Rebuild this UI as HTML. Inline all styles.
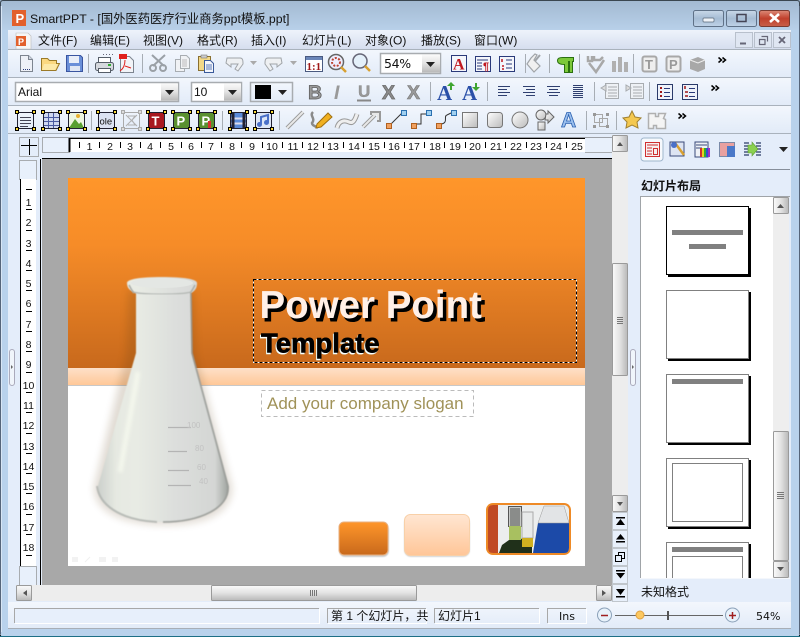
<!DOCTYPE html>
<html><head><meta charset="utf-8">
<style>
html,body{margin:0;padding:0;background:#000;width:800px;height:637px;overflow:hidden}
svg{display:block}
text{font-family:"Liberation Sans","WenQuanYi Zen Hei","Noto Sans CJK SC",sans-serif;font-size:12px;fill:#111}
</style></head><body>
<svg width="800" height="637" viewBox="0 0 800 637" xmlns="http://www.w3.org/2000/svg">
<defs>
<linearGradient id="gTitle" x1="0" y1="0" x2="0" y2="1"><stop offset="0" stop-color="#a2b9d1"/><stop offset="1" stop-color="#b8d0e9"/></linearGradient>
<linearGradient id="gMenu" x1="0" y1="0" x2="0" y2="1"><stop offset="0" stop-color="#eef3fb"/><stop offset="1" stop-color="#d6deef"/></linearGradient>
<linearGradient id="gBar" x1="0" y1="0" x2="0" y2="1"><stop offset="0" stop-color="#f3f7fd"/><stop offset="1" stop-color="#e2ebf8"/></linearGradient>
<linearGradient id="gOrange" x1="0" y1="0" x2="0" y2="1"><stop offset="0" stop-color="#ff962a"/><stop offset=".35" stop-color="#f68c28"/><stop offset="1" stop-color="#c8691c"/></linearGradient>
<linearGradient id="gPeach" x1="0" y1="0" x2="0" y2="1"><stop offset="0" stop-color="#fde0c8"/><stop offset="1" stop-color="#ffc898"/></linearGradient>
<linearGradient id="gPeach2" x1="0" y1="0" x2="0" y2="1"><stop offset="0" stop-color="#ffe6d2"/><stop offset="1" stop-color="#ffc698"/></linearGradient>
<linearGradient id="gBtnO" x1="0" y1="0" x2="0" y2="1"><stop offset="0" stop-color="#ff962a"/><stop offset="1" stop-color="#c8691c"/></linearGradient>
<linearGradient id="gV" x1="0" y1="0" x2="1" y2="0"><stop offset="0" stop-color="#fafafa"/><stop offset=".5" stop-color="#e2e2e2"/><stop offset="1" stop-color="#b8b8b8"/></linearGradient>
<linearGradient id="gH" x1="0" y1="0" x2="0" y2="1"><stop offset="0" stop-color="#fafafa"/><stop offset=".5" stop-color="#e2e2e2"/><stop offset="1" stop-color="#b8b8b8"/></linearGradient>
<linearGradient id="gTB" x1="0" y1="0" x2="0" y2="1"><stop offset="0" stop-color="#c9d8e8"/><stop offset=".5" stop-color="#a6bcd4"/><stop offset="1" stop-color="#bfd3e8"/></linearGradient>
<linearGradient id="gClose" x1="0" y1="0" x2="0" y2="1"><stop offset="0" stop-color="#dc8a78"/><stop offset=".5" stop-color="#c0402c"/><stop offset="1" stop-color="#c8604a"/></linearGradient>
<linearGradient id="gFlask" x1="0" y1="0" x2="1" y2="0"><stop offset="0" stop-color="#ccd0cc"/><stop offset=".14" stop-color="#e6e9e2"/><stop offset=".3" stop-color="#e8ebe4"/><stop offset=".6" stop-color="#dcdedc"/><stop offset=".9" stop-color="#d4d6d4"/><stop offset="1" stop-color="#a0a4a0"/></linearGradient>
<linearGradient id="gGrey" x1="0" y1="0" x2="1" y2="1"><stop offset="0" stop-color="#fff"/><stop offset="1" stop-color="#bbb"/></linearGradient>
<filter id="b1" x="-30%" y="-30%" width="160%" height="160%"><feGaussianBlur stdDeviation="4"/></filter>
<filter id="b2" x="-10%" y="-10%" width="120%" height="120%"><feGaussianBlur stdDeviation=".6"/></filter>
<filter id="b3" x="-40%" y="-20%" width="180%" height="140%"><feGaussianBlur stdDeviation="1.500"/></filter>

<g id="hb"><rect x="3.500" y="3.500" width="16" height="16" fill="none" stroke="#223"/><g fill="#f8d838" stroke="#000"><rect x="1.500" y="1.500" width="3" height="3"/><rect x="18.500" y="1.500" width="3" height="3"/><rect x="1.500" y="18.500" width="3" height="3"/><rect x="18.500" y="18.500" width="3" height="3"/></g></g>
<g id="hbg"><rect x="3.500" y="3.500" width="16" height="16" fill="none" stroke="#aaa"/><g fill="#ddd" stroke="#aaa"><rect x="1.500" y="1.500" width="3" height="3"/><rect x="18.500" y="1.500" width="3" height="3"/><rect x="1.500" y="18.500" width="3" height="3"/><rect x="18.500" y="18.500" width="3" height="3"/></g></g>
<g id="ar"><path d="M0 0h9l-4.500 5z" fill="#222"/></g>
<g id="chev"><path d="M.5 .5l3 2.500-3 2.500M4.500 .5l3 2.500-3 2.500" fill="none" stroke="#000" stroke-width="1.500"/></g>
</defs>

<!-- frame -->
<rect width="800" height="637" fill="#b9d2ec" rx="4"/>
<rect x="0" y="0" width="800" height="30" fill="url(#gTitle)"/>
<path d="M0 636.500H800" stroke="#1c6f86"/>
<path d="M.5 6V3Q.5 .5 3 .5H797Q799.500 .5 799.500 3V6" fill="none" stroke="#3a4650"/>
<path d="M.5 6V634M799.500 6V634" stroke="#56657a"/>
<path d="M1.500 6V632" stroke="#d8e6f5"/>

<!-- content bg -->
<rect x="8" y="30" width="783" height="599" fill="#e4edfa"/>
<rect x="8" y="30" width="783" height="19" fill="url(#gMenu)"/>
<rect x="8" y="49" width="783" height="28" fill="url(#gBar)"/>
<rect x="8" y="77" width="783" height="28" fill="url(#gBar)"/>
<rect x="8" y="105" width="783" height="28" fill="url(#gBar)"/>
<path d="M8 49.500H791M8 77.500H791M8 105.500H791M8 133.500H791" stroke="#a9b2bc"/>

<!-- title -->
<rect x="12" y="10" width="14" height="16" fill="#e2602c"/>
<text x="15.500" y="23" style="font-size:13px;font-weight:bold;fill:#fff">P</text>
<text x="30" y="23" style="font-size:12.300px">SmartPPT - [国外医药医疗行业商务ppt模板.ppt]</text>
<rect x="693.500" y="10.500" width="30" height="16" rx="2" fill="url(#gTB)" stroke="#5f7187"/>
<rect x="703" y="18" width="11" height="4" rx="1" fill="#eef2f7" stroke="#5a6a7a" stroke-width=".7"/>
<rect x="726.500" y="10.500" width="30" height="16" rx="2" fill="url(#gTB)" stroke="#5f7187"/>
<rect x="737" y="14.500" width="9" height="7" fill="none" stroke="#445" stroke-width="1.500"/>
<rect x="759.500" y="10.500" width="30" height="16" rx="2" fill="url(#gClose)" stroke="#7a3a30"/>
<path d="M770 14l9 8M779 14l-9 8" stroke="#fff" stroke-width="2.600"/>

<!-- menu -->
<path d="M16 33h12l3 3v13H16z" fill="#f6f6f6" stroke="#bbb" stroke-width=".6"/>
<rect x="16" y="36" width="10" height="10" fill="#e2602c"/>
<text x="18" y="45" style="font-size:9px;font-weight:bold;fill:#fff">P</text>
<text x="38" y="44.500">文件(F)</text>
<text x="90" y="44.500">编辑(E)</text>
<text x="143" y="44.500">视图(V)</text>
<text x="197" y="44.500">格式(R)</text>
<text x="251" y="44.500">插入(I)</text>
<text x="302" y="44.500" style="font-size:11.700px">幻灯片(L)</text>
<text x="365" y="44.500">对象(O)</text>
<text x="421" y="44.500">播放(S)</text>
<text x="474" y="44.500">窗口(W)</text>
<g fill="#dfe6f2" stroke="#b8c0cc"><rect x="735.500" y="32.500" width="17" height="15"/><rect x="754.500" y="32.500" width="17" height="15"/><rect x="773.500" y="32.500" width="17" height="15"/></g>
<path d="M740 43.500h6" stroke="#667" stroke-width="2"/>
<path d="M761.500 36.500h6v5M759.500 39.500h5.500v5h-5.500z" fill="none" stroke="#667" stroke-width="1.200"/>
<path d="M779 37l6 6M785 37l-6 6" stroke="#667" stroke-width="1.800"/>

<!-- separators -->
<path d="M88.500 54v19M142.500 54v19M525.500 54v19M549.500 54v19M579.500 54v19M633.500 54v19
M430.500 82v19M487.500 82v19M594.500 82v19M649.500 82v19
M91.500 111v19M222.500 111v19M279.500 111v19M586.500 111v19M616.500 111v19" stroke="#a7adb4"/>

<!-- row1 -->
<path d="M20.500 55.500h8l4 4v12h-12z" fill="#eef1f7" stroke="#7d8590"/><path d="M28.500 55.500v4h4" fill="#cfd5e0" stroke="#7d8590"/><path d="M23 69.500h1M25 69.500h1M27 69.500h1M29 69.500h1" stroke="#2a3a7a"/>
<path d="M41.500 70.500V58.500h6l2 2h7v3h3l-3.500 7z" fill="#fbd880" stroke="#9b7a28"/><path d="M44 64h14l-3 6H42z" fill="#fde9a8"/>
<path d="M66.500 55.500h14l2 2v14h-16z" fill="#6a8fd8" stroke="#3a55a0"/><rect x="69" y="56" width="10" height="7" fill="#e9eef8"/><rect x="70" y="66" width="10" height="5" fill="#dfe6f3"/>
<g fill="#d6d9de" stroke="#565e68"><rect x="98.500" y="57.500" width="12" height="6" fill="#fff"/><rect x="95.500" y="62.500" width="18" height="8" rx="2"/><rect x="98.500" y="68.500" width="12" height="4" fill="#fff"/></g><rect x="108" y="64" width="3" height="2" fill="#3a3"/><path d="M103 54.500h1M106 54.500h1M109 54.500h1M112 54.500h1" stroke="#667"/>
<path d="M120.500 56.500h9l4 4v12h-13z" fill="#f2f4f8" stroke="#7d8590"/><path d="M119 54h8v5h-8z" fill="#e0201c"/><path d="M125 60c0 5-2 9-5 11M125 66l6 2" stroke="#e0201c" fill="none"/>
<g fill="none" stroke="#9aa0a6" stroke-width="2"><path d="M152 55l12 11M165 55l-12 11"/><circle cx="153" cy="68" r="3"/><circle cx="163" cy="68" r="3"/></g>
<g fill="#f0f2f5" stroke="#a8adb2"><rect x="175.500" y="59.500" width="9" height="12"/><path d="M180.500 55.500h6l3 3v10h-9z"/></g><path d="M182 60h5M182 62h5M182 64h5M182 66h5" stroke="#bbb"/>
<rect x="198.500" y="56.500" width="12" height="14" fill="#f2d888" stroke="#8a7030"/><rect x="201" y="55" width="6" height="3" fill="#ccc" stroke="#666" stroke-width=".5"/><path d="M204.500 60.500h6l3 3v9h-9z" fill="#f4f6fb" stroke="#3a5a9a"/><path d="M206 65h6M206 67h6M206 69h6" stroke="#5a7aba"/>
<path d="M227 58h13c3 0 3 3 3 6l-5 7-3-2 3-5h-7v3l-5-4 1-5z" fill="#eef0f2" stroke="#a0a4a8"/>
<path d="M250 61h7l-3.500 4z" fill="#aaa"/>
<path d="M280 58h-12c-3 0-3 3-3 6l5 7 3-2-3-5h7v3l5-4-1-5z" fill="#eef0f2" stroke="#a0a4a8"/>
<path d="M290 61h7l-3.500 4z" fill="#aaa"/>
<rect x="305.500" y="56.500" width="17" height="15" fill="#fff" stroke="#4a5a80"/><rect x="306" y="57" width="16" height="3" fill="#6a85b8"/><text x="306.500" y="70" style="font-size:11px;font-weight:bold;fill:#a01818;font-family:'Liberation Serif',serif">1:1</text>
<circle cx="336" cy="62" r="7.500" fill="#eef" stroke="#666" stroke-width="1.500"/><circle cx="336" cy="62" r="4" fill="none" stroke="#b43" stroke-width="2" stroke-dasharray="2 1.500"/><path d="M341 67l5 5" stroke="#d8a030" stroke-width="2.500"/>
<circle cx="360" cy="61" r="7" fill="#e4f0fa" stroke="#667" stroke-width="1.500"/><path d="M365 66l5 5" stroke="#d8a030" stroke-width="2.500"/>
<rect x="380.500" y="53.500" width="60" height="20" fill="#fff" stroke="#a8acb0" stroke-width="1.500"/><rect x="422" y="54.500" width="18" height="18" fill="url(#gH)"/><use href="#ar" x="426" y="62"/>
<text x="384" y="68" style="font-size:12.500px;font-family:'DejaVu Sans',sans-serif;letter-spacing:-.3px">54%</text>
<rect x="451.500" y="55.500" width="15" height="16" fill="#f4f6fb" stroke="#2a3a7a"/><text x="453" y="69.500" style="font-size:16px;font-weight:bold;fill:#c01820;font-family:'Liberation Serif',serif">A</text>
<rect x="475.500" y="56.500" width="15" height="15" fill="#f4f6fb" stroke="#2a3a7a"/><path d="M477 60h11M477 63h5M477 66h5M477 69h5" stroke="#2a3a7a"/><text x="483" y="70" style="font-size:11px;fill:#c01820;font-weight:bold">¶</text>
<rect x="499.500" y="56.500" width="15" height="15" fill="#f4f6fb" stroke="#2a3a7a"/><path d="M506 60h6M506 64h6M506 68h6" stroke="#2a3a7a"/><path d="M502 59v3M502 66h2M502 69h2" stroke="#c01820" stroke-width="1.500"/>
<path d="M527 64l7 8 6-6-6-6 3-5-2-1-4 4z" fill="#f0f0f0" stroke="#a0a4a8" stroke-width="1.200"/><path d="M540 55l-5 6" stroke="#a0a4a8" stroke-width="2"/>
<path d="M557.500 60.500c0-2 2-3 5-3h11v4h-1v11h-3v-11h-1v11h-4v-8c-4 0-7-1-7-4z" fill="#7cc83a" stroke="#2a7010"/>
<g stroke="#a8a8a8" fill="none" stroke-width="2.500"><path d="M588 56v5h4v-5M594 56v4h6l3-3"/><path d="M589 63l7 9 8-12"/></g>
<g fill="#b0b0b0"><rect x="612" y="61" width="4" height="11"/><rect x="618" y="57" width="4" height="15"/><rect x="624" y="62" width="4" height="10"/></g>
<rect x="642.500" y="56.500" width="14" height="15" rx="2" fill="#eee" stroke="#a8a8a8" stroke-width="2"/><text x="645" y="69" style="font-size:13px;font-weight:bold;fill:#999">T</text>
<rect x="666.500" y="56.500" width="14" height="15" rx="2" fill="#eee" stroke="#a8a8a8" stroke-width="2"/><text x="669" y="69" style="font-size:13px;font-weight:bold;fill:#999">P</text>
<path d="M690 60l8-3 7 3v9l-7 3-8-3z" fill="#a8a8a8"/><path d="M690 60l8 3 7-3" fill="none" stroke="#eee"/>
<use href="#chev" x="718" y="57"/>

<!-- row2 -->
<rect x="15.500" y="82.500" width="163" height="19" fill="#fff" stroke="#a8acb0" stroke-width="1.500"/><rect x="161" y="83.500" width="17" height="17" fill="url(#gH)"/><use href="#ar" x="165" y="90"/>
<text x="18" y="96" style="font-size:12px">Arial</text>
<rect x="191.500" y="82.500" width="50" height="19" fill="#fff" stroke="#a8acb0" stroke-width="1.500"/><rect x="224" y="83.500" width="17" height="17" fill="url(#gH)"/><use href="#ar" x="228" y="90"/>
<text x="194" y="96" style="font-size:12px">10</text>
<rect x="250.500" y="82.500" width="42" height="19" fill="url(#gBar)" stroke="#a8acb0" stroke-width="1.500"/><rect x="255" y="85" width="16" height="14" fill="#000"/><use href="#ar" x="278" y="90"/>
<text x="308" y="99" style="font-size:19.500px;font-weight:bold;fill:#9a9a9a;stroke:#555;stroke-width:.7">B</text>
<text x="334" y="99" style="font-size:19.500px;font-weight:bold;font-style:italic;fill:#999">I</text>
<text x="358" y="97" style="font-size:17px;font-weight:bold;fill:#999;stroke:#777;stroke-width:.3">U</text>
<text x="382" y="99" style="font-size:19.500px;font-weight:bold;fill:#8a8a8a;stroke:#666;stroke-width:.7">X</text>
<text x="407" y="99" style="font-size:19.500px;font-weight:bold;fill:#999;stroke:#777;stroke-width:.6">X</text>
<path d="M357 100.500h14" stroke="#888" stroke-width="2"/>
<text x="437" y="100" style="font-size:21px;font-weight:bold;fill:#2a50a8;font-family:'Liberation Serif',serif">A</text>
<path d="M450 90v-4h-3l4-4 4 4h-3v4z" fill="#3fa530"/>
<text x="462" y="100" style="font-size:21px;font-weight:bold;fill:#2a50a8;font-family:'Liberation Serif',serif">A</text>
<path d="M475 83v4h-3l4 4 4-4h-3v-4z" fill="#3fa530"/>
<g stroke="#2f3f6f" fill="none">
<path d="M498 86.500h12M498 89.500h9M498 92.500h12M498 95.500h9"/>
<path d="M523 86.500h12M526 89.500h9M523 92.500h12M526 95.500h9"/>
<path d="M547 86.500h13M549 89.500h9M547 92.500h13M549 95.500h9"/>
<path d="M573 85.500h10M573 87.500h10M573 89.500h10M573 91.500h10M573 93.500h10M573 95.500h10M573 97.500h10"/>
</g>
<g fill="#eef1f5" stroke="#a8acb0"><path d="M605.500 83.500h13v15h-13z"/><path d="M630.500 83.500h13v15h-13z"/></g>
<path d="M601 88l5-3v6zM608 87h9M608 90h9M608 93h9M608 96h9" stroke="#a8acb0" fill="#ddd"/>
<path d="M626 85v6l5-3zM633 87h9M633 90h9M633 93h9M633 96h9" stroke="#a8acb0" fill="#ddd"/>
<rect x="657.500" y="84.500" width="15" height="15" fill="#eef2fa" stroke="#2a3a6a"/><path d="M664 88.500h6M664 92.500h6M664 96.500h6" stroke="#2a3a7a"/><path d="M660 88h2M660 92h2M660 96h2" stroke="#a01818" stroke-width="2"/>
<rect x="682.500" y="84.500" width="15" height="15" fill="#eef2fa" stroke="#2a3a6a"/><path d="M689 88.500h6M689 92.500h6M689 96.500h6" stroke="#2a3a7a"/><path d="M685 86v3M685 92h3M685 96h3" stroke="#a01818" stroke-width="1.500"/>
<use href="#chev" x="711" y="85"/>

<!-- row3 -->
<g transform="translate(14,109)"><use href="#hb"/><path d="M6 8.500h11M6 11.500h11M6 14.500h11M6 17.500h8" stroke="#445"/></g>
<g transform="translate(40,109)"><rect x="4" y="4" width="15" height="15" fill="#cfd8f0"/><use href="#hb"/><path d="M4 8.500h15M4 12.500h15M4 16.500h15M8.500 4v15M13.500 4v15" stroke="#4a5aa0"/></g>
<g transform="translate(65,109)"><rect x="4" y="4" width="15" height="15" fill="#eef6e0"/><path d="M4 19l6-9 4 5 2-2 3 6z" fill="#58a030"/><circle cx="13" cy="7" r="2" fill="#e8b030"/><use href="#hb"/></g>
<g transform="translate(95,109)"><rect x="4" y="4" width="15" height="15" fill="#dbe2f2"/><use href="#hb"/><text x="4.500" y="15.500" style="font-size:9.500px">ole</text></g>
<g transform="translate(120,109)"><use href="#hbg"/><path d="M6 6l11 11M17 6L6 17M8 7h7l-3 4 3 5H8" fill="none" stroke="#b0b0b0"/></g>
<g transform="translate(145,109)"><rect x="4" y="4" width="15" height="15" fill="#a81820"/><use href="#hb"/><text x="6.500" y="16.500" style="font-size:13px;font-weight:bold;fill:#fff">T</text></g>
<g transform="translate(170,109)"><rect x="4" y="4" width="15" height="15" fill="#5a9030"/><use href="#hb"/><text x="6.500" y="16.500" style="font-size:13px;font-weight:bold;fill:#fff">P</text></g>
<g transform="translate(195,109)"><rect x="4" y="4" width="15" height="15" fill="#5a9030"/><use href="#hb"/><text x="6.500" y="16.500" style="font-size:13px;font-weight:bold;fill:#fff">P</text><path d="M13 12h3v7h-3z" fill="#d83030"/></g>
<g transform="translate(227,109)"><rect x="4" y="4" width="15" height="15" fill="#5a8ad8"/><path d="M4 9.500h15M4 14.500h15" stroke="#dde" stroke-width="2"/><path d="M6 4v15M17 4v15" stroke="#223" stroke-width="3"/><use href="#hb"/></g>
<g transform="translate(252,109)"><rect x="4" y="4" width="15" height="15" fill="#dde6f6"/><use href="#hb"/><path d="M9 15V8l7-2v7" fill="none" stroke="#4a70c8" stroke-width="2"/><circle cx="7.500" cy="15.500" r="2.500" fill="#4a70c8"/><circle cx="14.500" cy="13.500" r="2.500" fill="#4a70c8"/></g>
<path d="M287 128l16-16" stroke="#999" stroke-width="4"/><path d="M287 128l16-16" stroke="#e8e8e8" stroke-width="2"/>
<path d="M313 112c-4 4 3 6-1 11 0 3 4 3 6 5" fill="none" stroke="#8a8a8a" stroke-width="2.500"/><path d="M317 124l11-11 4 4-11 10-5 1z" fill="#f0b020" stroke="#a07010"/>
<path d="M337 128c2-8 8-8 12-6s6-2 8-8" fill="none" stroke="#999" stroke-width="5"/><path d="M337 128c2-8 8-8 12-6s6-2 8-8" fill="none" stroke="#eee" stroke-width="3"/>
<path d="M363 127l12-12M370 113h9v9" fill="none" stroke="#999" stroke-width="4"/><path d="M363 127l12-12M372 114h6v6" fill="none" stroke="#e8e8e8" stroke-width="2"/>
<g stroke="#333" fill="none"><path d="M391 124l11-11"/><path d="M416 124h5v-10h6"/><path d="M441 124c8-1 2-8 6-9l4-2"/></g>
<g fill="#f0a060" stroke="#b06020"><rect x="386.500" y="123.500" width="5" height="5"/><rect x="411.500" y="123.500" width="5" height="5"/><rect x="436.500" y="123.500" width="5" height="5"/></g>
<g fill="#a0d0f0" stroke="#2a70b0"><rect x="401.500" y="110.500" width="5" height="5"/><rect x="426.500" y="110.500" width="5" height="5"/><rect x="451.500" y="110.500" width="5" height="5"/></g>
<rect x="462.500" y="112.500" width="15" height="15" fill="url(#gGrey)" stroke="#777"/>
<rect x="487.500" y="112.500" width="15" height="15" rx="3" fill="url(#gGrey)" stroke="#777"/>
<circle cx="520" cy="120" r="8" fill="url(#gGrey)" stroke="#777"/>
<g fill="url(#gGrey)" stroke="#666"><circle cx="541" cy="115" r="5"/><path d="M538 122h7v8h-7z"/><path d="M546 114h2v-3l6 6-6 6v-3h-3z"/></g>
<text x="561" y="127" style="font-size:21px;font-weight:bold;fill:#9cc0ee;stroke:#2a60b0;stroke-width:.8">A</text>
<g fill="none" stroke="#a8a8a8"><rect x="594.500" y="114.500" width="8" height="8"/><rect x="599.500" y="118.500" width="8" height="8"/></g><g fill="#999"><rect x="593" y="113" width="3" height="3"/><rect x="606" y="125" width="3" height="3"/><rect x="606" y="113" width="3" height="3"/><rect x="593" y="125" width="3" height="3"/></g>
<path d="M632 111l3 6 6 1-4 4 1 6-6-3-6 3 1-6-4-4 6-1z" fill="#f4c850" stroke="#a08030"/>
<path d="M648.500 113.500h7v3h3v-3h7l-2 5 2 1v9h-9v-3h-3v3h-5z" fill="#f4f4f4" stroke="#b0b0b0" stroke-width="1.500"/>
<use href="#chev" x="678" y="113"/>

<!-- rulers -->
<rect x="19.500" y="137.500" width="19" height="19" fill="none" stroke="#a8acb0"/>
<path d="M21 145.500h16M29.500 139v16" stroke="#000"/>
<rect x="42.500" y="137.500" width="27" height="15" fill="#e8f0fb" stroke="#a8acb0"/>
<rect x="69" y="139" width="516" height="13" fill="#fff"/>
<rect x="585" y="137" width="27" height="15" fill="#e8f0fb"/><path d="M585 152.500h27M585 137.500h27" stroke="#a8acb0"/>
<path d="M42 137.500H612" stroke="#9ca0a6"/><path d="M69.500 138v14" stroke="#000" stroke-width="2"/>
<path d="M69 138.500H585" stroke="#000"/>
<path d="M42 158.500H612" stroke="#000"/>
<path d="M79.500 142v6M99.500 142v6M120.500 142v6M140.500 142v6M160.500 142v6M181.500 142v6M201.500 142v6M221.500 142v6M241.500 142v6M262.500 142v6M282.500 142v6M302.500 142v6M323.500 142v6M343.500 142v6M363.500 142v6M384.500 142v6M404.500 142v6M424.500 142v6M444.500 142v6M465.500 142v6M485.500 142v6M505.500 142v6M526.500 142v6M546.500 142v6M566.500 142v6" stroke="#000"/>
<g text-anchor="middle">
<text x="89.500" y="150" style="font-size:10.500px">1</text><text x="110" y="150" style="font-size:10.500px">2</text><text x="130" y="150" style="font-size:10.500px">3</text><text x="150" y="150" style="font-size:10.500px">4</text><text x="171" y="150" style="font-size:10.500px">5</text><text x="191" y="150" style="font-size:10.500px">6</text><text x="211" y="150" style="font-size:10.500px">7</text><text x="232" y="150" style="font-size:10.500px">8</text><text x="252" y="150" style="font-size:10.500px">9</text><text x="272" y="150" style="font-size:10.500px">10</text><text x="293" y="150" style="font-size:10.500px">11</text><text x="313" y="150" style="font-size:10.500px">12</text><text x="333" y="150" style="font-size:10.500px">13</text><text x="354" y="150" style="font-size:10.500px">14</text><text x="374" y="150" style="font-size:10.500px">15</text><text x="394" y="150" style="font-size:10.500px">16</text><text x="414" y="150" style="font-size:10.500px">17</text><text x="435" y="150" style="font-size:10.500px">18</text><text x="455" y="150" style="font-size:10.500px">19</text><text x="475" y="150" style="font-size:10.500px">20</text><text x="496" y="150" style="font-size:10.500px">21</text><text x="516" y="150" style="font-size:10.500px">22</text><text x="536" y="150" style="font-size:10.500px">23</text><text x="556" y="150" style="font-size:10.500px">24</text><text x="577" y="150" style="font-size:10.500px">25</text>
</g>
<!-- v ruler -->
<rect x="19.500" y="160.500" width="17" height="19" fill="#e8f0fb" stroke="#a8acb0"/>
<rect x="20" y="179" width="16" height="387" fill="#fff"/>
<rect x="19.500" y="566.500" width="17" height="19" fill="#e8f0fb" stroke="#a8acb0"/>
<path d="M20.500 179v387" stroke="#000"/>
<path d="M40.500 159V585" stroke="#000"/>
<path d="M26 189.500h6M26 209.500h6M26 230.500h6M26 250.500h6M26 270.500h6M26 290.500h6M26 311.500h6M26 331.500h6M26 351.500h6M26 372.500h6M26 392.500h6M26 412.500h6M26 433.500h6M26 453.500h6M26 473.500h6M26 493.500h6M26 514.500h6M26 534.500h6M26 555.500h6" stroke="#000"/>
<g text-anchor="middle">
<text x="28.500" y="206" style="font-size:10.500px">1</text><text x="28.500" y="226" style="font-size:10.500px">2</text><text x="28.500" y="247" style="font-size:10.500px">3</text><text x="28.500" y="267" style="font-size:10.500px">4</text><text x="28.500" y="287" style="font-size:10.500px">5</text><text x="28.500" y="307" style="font-size:10.500px">6</text><text x="28.500" y="328" style="font-size:10.500px">7</text><text x="28.500" y="348" style="font-size:10.500px">8</text><text x="28.500" y="368" style="font-size:10.500px">9</text><text x="28.500" y="389" style="font-size:10.500px">10</text><text x="28.500" y="409" style="font-size:10.500px">11</text><text x="28.500" y="429" style="font-size:10.500px">12</text><text x="28.500" y="450" style="font-size:10.500px">13</text><text x="28.500" y="470" style="font-size:10.500px">14</text><text x="28.500" y="490" style="font-size:10.500px">15</text><text x="28.500" y="510" style="font-size:10.500px">16</text><text x="28.500" y="531" style="font-size:10.500px">17</text><text x="28.500" y="551" style="font-size:10.500px">18</text>
</g>

<!-- canvas -->
<rect x="42" y="159" width="570" height="426" fill="#a8a8a8"/>
<rect x="68" y="178" width="517" height="388" fill="#fff"/>
<rect x="68" y="178" width="517" height="190" fill="url(#gOrange)"/>
<rect x="68" y="368" width="517" height="17" fill="url(#gPeach)"/>
<path d="M68 385.500H585" stroke="#c8c8c8"/>

<!-- flask -->
<path d="M128 290l-2 65-32 132c0 30 40 38 72 38s66-8 66-38l-36-132-2-65z" fill="#5a3a10" opacity=".18" filter="url(#b1)"/>
<path d="M127 283c0-4 14-6 35-6s35 2 35 6c0 5-2 8-6 10l1 60 36 133c2 22-28 36-65 36s-66-14-65-36l38-133v-60c-6-2-9-5-9-10z" fill="url(#gFlask)" filter="url(#b2)"/>
<ellipse cx="162" cy="283" rx="31" ry="5" fill="#e4e7e4"/>
<path d="M134 292c8 3 48 3 56 0" fill="none" stroke="#b8bcb8" stroke-width="1.500" filter="url(#b2)"/>
<path d="M129 285c2 4 3 6 5 8M195 285c-2 4-3 6-5 8" fill="none" stroke="#a8aca8" stroke-width="1.500" filter="url(#b2)"/>
<path d="M191 293l1 60 36 133c2 22-28 36-65 36" fill="none" stroke="#8e928e" stroke-width="1.800" opacity=".75" filter="url(#b2)"/>
<path d="M97 486c2 18 22 34 60 36" fill="none" stroke="#aeb2ae" stroke-width="2" opacity=".8" filter="url(#b2)"/>
<path d="M138 372l-18 100" stroke="#fbfef2" stroke-width="5" opacity=".6" filter="url(#b3)"/>
<path d="M168 427.500h23M168 451.500h19M168 470.500h21M168 485.500h23" stroke="#b4b4b4" stroke-width="1.200"/>
<text x="187" y="428" style="font-size:8px;fill:#c2c2c2">100</text><text x="195" y="451" style="font-size:8px;fill:#c2c2c2">80</text><text x="197" y="470" style="font-size:8px;fill:#c2c2c2">60</text><text x="199" y="484" style="font-size:8px;fill:#c2c2c2">40</text>

<!-- title text -->
<text x="262.500" y="321" style="font-size:38.500px;font-weight:bold;fill:#000;stroke:#000;stroke-width:1">Power Point</text>
<text x="259.500" y="318" style="font-size:38.500px;font-weight:bold;fill:#fff0e8">Power Point</text>
<text x="260" y="354" style="font-size:27.500px;font-weight:bold;fill:#fff;stroke:#dff;stroke-width:.5">Template</text>
<text x="261" y="352.500" style="font-size:27.500px;font-weight:bold;fill:#000;stroke:#000;stroke-width:.6">Template</text>
<rect x="253.500" y="279.500" width="323" height="83" fill="none" stroke="#fff"/>
<rect x="253.500" y="279.500" width="323" height="83" fill="none" stroke="#000" stroke-dasharray="3 2"/>
<rect x="261.500" y="390.500" width="212" height="26" fill="none" stroke="#bbb" stroke-dasharray="4 3"/>
<text x="267" y="409" style="font-size:17px;fill:#a09258">Add your company slogan</text>

<!-- slide buttons -->
<rect x="339" y="524" width="50" height="33" rx="6" fill="#999" opacity=".5" filter="url(#b2)"/>
<rect x="339" y="522" width="49" height="33" rx="5" fill="url(#gBtnO)" stroke="#e8b080"/>
<rect x="404" y="516" width="66" height="41" rx="7" fill="#999" opacity=".4" filter="url(#b2)"/>
<rect x="404.500" y="514.500" width="65" height="41" rx="6" fill="url(#gPeach2)" stroke="#f8d0a8"/>
<rect x="486" y="503" width="85" height="52" rx="7" fill="#ee8a26"/>
<rect x="488" y="505" width="81" height="48" rx="5" fill="#eceeee"/>
<path d="M493 505h5v48h-5q-5 0-5-5v-38q0-5 5-5z" fill="#c04a24"/>
<path d="M499 553l3-8 7-5V527h11v11l12 6v9z" fill="#20301a"/>
<rect x="508.500" y="506.500" width="13" height="20" fill="#c8cac8" stroke="#555"/>
<rect x="510" y="508" width="10" height="18" fill="#8a8c8a"/>
<rect x="509" y="526" width="12" height="14" fill="#a8c060"/>
<rect x="522" y="512" width="11" height="26" fill="#e8eaea" stroke="#aaa"/>
<rect x="522" y="538" width="11" height="9" fill="#d0b020"/>
<path d="M533 553l5-30h31v25q0 5-5 5z" fill="#1c4aa8"/>
<path d="M538 523l6-17h20l5 17z" fill="#e2e4e6" stroke="#999" stroke-width=".5"/>
<g fill="#f2f2f2"><rect x="72" y="557" width="6" height="5"/><path d="M85 562l5-5" stroke="#f0f0f0"/><rect x="99" y="557" width="7" height="5"/><rect x="112" y="557" width="6" height="5"/></g>

<!-- hscroll -->
<rect x="16" y="585" width="596" height="16" fill="#ededed"/>
<rect x="16.500" y="585.500" width="15" height="15" rx="1" fill="url(#gH)" stroke="#9a9a9a"/><path d="M27 590v6l-4-3z" fill="#555"/>
<rect x="211.500" y="585.500" width="205" height="15" rx="1" fill="url(#gH)" stroke="#9a9a9a"/><path d="M310.500 590v6M312.500 590v6M314.500 590v6M316.500 590v6" stroke="#777"/>
<rect x="596.500" y="585.500" width="15" height="15" rx="1" fill="url(#gH)" stroke="#9a9a9a"/><path d="M602 590v6l4-3z" fill="#555"/>

<!-- vscroll -->
<rect x="612" y="135" width="16" height="377" fill="#ededed"/>
<rect x="612.500" y="135.500" width="15" height="16" rx="1" fill="url(#gV)" stroke="#9a9a9a"/><path d="M617 146h6l-3-4z" fill="#555"/>
<rect x="612.500" y="263.500" width="15" height="112" rx="1" fill="url(#gV)" stroke="#9a9a9a"/><path d="M617 317.500h6M617 319.500h6M617 321.500h6M617 323.500h6" stroke="#777"/>
<rect x="612.500" y="495.500" width="15" height="16" rx="1" fill="url(#gV)" stroke="#9a9a9a"/><path d="M617 502h6l-3 4z" fill="#555"/>
<g fill="#e8f0fb" stroke="#c0c6cc"><rect x="612.500" y="512.500" width="15" height="17"/><rect x="612.500" y="530.500" width="15" height="17"/><rect x="612.500" y="548.500" width="15" height="17"/><rect x="612.500" y="566.500" width="15" height="17"/><rect x="612.500" y="584.500" width="15" height="17"/></g>
<path d="M616 517h9v1.500h-9zM620.500 519l4.500 6h-9zM620.500 534l4.500 5.500h-9zM616 541h9v1.500h-9zM616 570h9v1.500h-9zM616 573h9l-4.500 5.500zM616 589h9l-4.500 6zM616 596h9v1.500h-9z" fill="#000"/>
<path d="M615.500 555.500h6v6h-6zM618.500 555v-2.500h6v6h-3" fill="none" stroke="#000"/>

<!-- splitter handles -->
<rect x="9.500" y="349.500" width="5" height="36" rx="2.500" fill="#f0f5fb" stroke="#aab"/><path d="M11 365l2 2-2 2z" fill="#666"/>
<rect x="630.500" y="349.500" width="5" height="36" rx="2.500" fill="#f0f5fb" stroke="#aab"/><path d="M632 365l2 2-2 2z" fill="#666"/>

<!-- task pane -->
<rect x="640" y="134" width="151" height="468" fill="#e4edfa"/>
<rect x="641" y="138" width="22" height="23" rx="3" fill="#f6f9fd" stroke="#9fb6cc"/>
<rect x="645.500" y="142.500" width="14" height="14" fill="#f6f0f0" stroke="#d03030"/><path d="M647 145h11M647 148h5M647 151h5M647 154h5" stroke="#d03030"/><rect x="653.500" y="148.500" width="4" height="6" fill="none" stroke="#d03030"/>
<rect x="670" y="142" width="14" height="14" fill="#dde4f2" stroke="#3a4a7a"/><path d="M675 143l9 12" stroke="#d8a030" stroke-width="2.500"/><circle cx="674" cy="145" r="3" fill="#4a70c8"/>
<rect x="695" y="142" width="13" height="15" fill="#eef1f6" stroke="#3a4a7a"/><path d="M696 145h11M696 148h6" stroke="#3a4a7a"/><rect x="700" y="148" width="2" height="9" fill="#d03030"/><rect x="702" y="148" width="2" height="9" fill="#e8d020"/><rect x="704" y="148" width="2" height="9" fill="#30b030"/><rect x="706" y="148" width="2" height="9" fill="#3050d0"/><rect x="708" y="148" width="2" height="9" fill="#a030c0"/>
<rect x="719.500" y="142.500" width="15" height="14" fill="#e8a0a0" stroke="#7a8aa8"/><rect x="727" y="146" width="8" height="11" fill="#4a78c8"/>
<path d="M744 143h5M744 146h5M744 149h5M744 152h5M744 155h5M756 143h5M756 146h5M756 149h5M756 152h5M756 155h5" stroke="#4a5a80" stroke-width="1.500"/><path d="M748 145h4v-3l6 7-6 7v-3h-4z" fill="#8ad050" stroke="#5a9a30" stroke-width=".6"/>
<use href="#ar" x="779" y="147"/>
<rect x="640" y="169" width="150" height="1" fill="#6e7682" opacity=".8"/>
<text x="641" y="190" style="font-size:12px;font-weight:bold">幻灯片布局</text>
<rect x="640" y="196" width="133" height="382" fill="#fff"/>
<path d="M640.500 196V578M640 196.500H790" stroke="#a0a4a8"/>
<rect x="773" y="197" width="16" height="381" fill="#eeeeee"/>
<rect x="773.500" y="197.500" width="15" height="16" rx="1" fill="url(#gV)" stroke="#9a9a9a"/><path d="M777 208h7l-3.500-4z" fill="#555"/>
<rect x="773.500" y="431.500" width="15" height="129" rx="1" fill="url(#gV)" stroke="#9a9a9a"/><path d="M777 492.500h7M777 494.500h7M777 496.500h7M777 498.500h7" stroke="#777"/>
<rect x="773.500" y="561.500" width="15" height="16" rx="1" fill="url(#gV)" stroke="#9a9a9a"/><path d="M777 567h7l-3.500 4z" fill="#555"/>
<!-- thumbs -->
<rect x="668" y="208" width="83" height="69" fill="#000"/><rect x="666.500" y="206.500" width="82" height="68" fill="#fff" stroke="#000"/>
<rect x="672" y="230" width="71" height="5" fill="#808080"/><rect x="689" y="244" width="37" height="5" fill="#808080"/>
<rect x="668" y="292" width="83" height="69" fill="#000"/><rect x="666.500" y="290.500" width="82" height="68" fill="#fff" stroke="#808080"/>
<rect x="668" y="376" width="83" height="69" fill="#000"/><rect x="666.500" y="374.500" width="82" height="68" fill="#fff" stroke="#808080"/><rect x="672" y="379" width="71" height="5" fill="#808080"/>
<rect x="668" y="460" width="83" height="69" fill="#000"/><rect x="666.500" y="458.500" width="82" height="68" fill="#fff" stroke="#808080"/><rect x="672.500" y="463.500" width="70" height="58" fill="#fff" stroke="#808080"/>
<rect x="668" y="544" width="83" height="34" fill="#000"/><rect x="666.500" y="542.500" width="82" height="36" fill="#fff" stroke="#808080"/><rect x="672" y="547" width="71" height="5" fill="#808080"/><rect x="672.500" y="556.500" width="70" height="24" fill="#fff" stroke="#808080"/>
<rect x="640" y="578" width="151" height="24" fill="#e4edfa"/>
<rect x="640" y="578" width="150" height="1" fill="#f4f7fc"/>
<text x="641" y="596" style="font-size:12px">未知格式</text>

<!-- status -->
<rect x="8" y="602" width="783" height="26" fill="url(#gBar)"/>
<rect x="14.500" y="608.500" width="305" height="15" fill="#e7effb"/>
<path d="M14.500 623V608.500H319" fill="none" stroke="#a8a8a8"/><path d="M15 623.500H319.500V609" fill="none" stroke="#fff"/>
<path d="M327.500 623V608.500H426" fill="none" stroke="#a8a8a8"/><path d="M328 623.500H426.500V609" fill="none" stroke="#fff"/>
<path d="M434.500 623V608.500H539" fill="none" stroke="#a8a8a8"/><path d="M435 623.500H539.500V609" fill="none" stroke="#fff"/>
<path d="M547.500 623V608.500H586" fill="none" stroke="#a8a8a8"/><path d="M548 623.500H586.500V609" fill="none" stroke="#fff"/>
<text x="331" y="620">第 1 个幻灯片，共</text>
<text x="438" y="620">幻灯片1</text>
<text x="559" y="620" style="font-family:'DejaVu Sans',sans-serif;font-size:11px">Ins</text>
<circle cx="604.500" cy="615" r="7" fill="#e8f2fb" stroke="#8aa0b8"/><path d="M601 615.500h7" stroke="#a02020" stroke-width="1.500"/>
<path d="M615 615.500H723" stroke="#666"/>
<path d="M668 611v9" stroke="#555" stroke-width="2"/>
<circle cx="640" cy="615" r="4" fill="#fcc860" stroke="#e0a040"/>
<circle cx="732.500" cy="615" r="7" fill="#e8f2fb" stroke="#8aa0b8"/><path d="M729 615.500h7M732.500 612v7" stroke="#a02020" stroke-width="1.500"/>
<text x="756" y="620" style="font-family:'DejaVu Sans',sans-serif;font-size:11px">54%</text>
<path d="M8 628.500H791" stroke="#a8aeb6"/>
</svg>
</body></html>
